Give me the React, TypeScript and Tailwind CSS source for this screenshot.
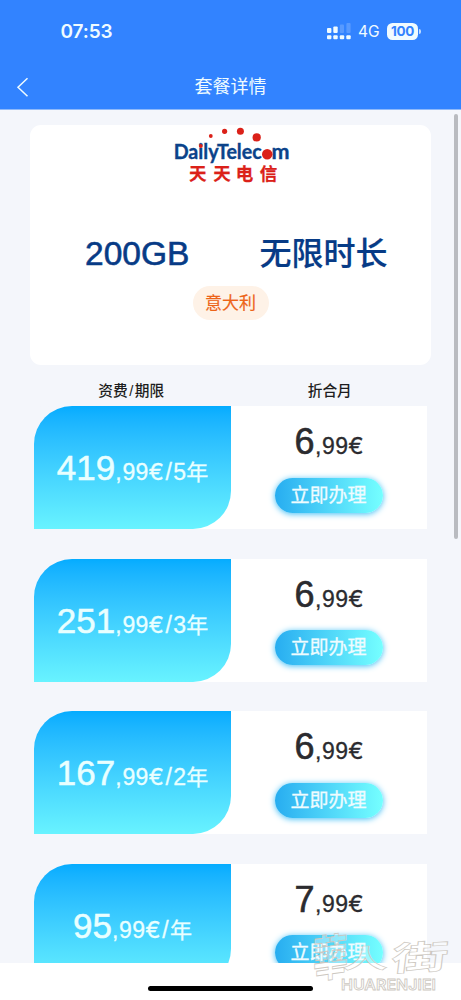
type Plan = { whole: string; years: string; monthly: string };

const plans: Plan[] = [
  { whole: '419', years: '5', monthly: '6' },
  { whole: '251', years: '3', monthly: '6' },
  { whole: '167', years: '2', monthly: '6' },
  { whole: '95', years: '', monthly: '7' },
];

function StatusBar() {
  return (
    <div className="flex h-[63px] items-center pr-[40px] pl-[60.5px] font-['Inter','Noto_Sans_CJK_SC',sans-serif] text-[#f0fbff]">
      <span className="text-[19px] leading-none font-semibold tracking-[-0.1px]">07:53</span>
      <svg className="ml-auto" width="25" height="17" viewBox="0 0 25 17" fill="currentColor">
        <rect x="0" y="5" width="4.4" height="5" rx="1" />
        <rect x="6.3" y="3.6" width="4.4" height="6.4" rx="1" />
        <rect x="12.8" y="1.5" width="4.2" height="8.5" rx="1" opacity=".2" />
        <rect x="19.4" y="0" width="4.2" height="10" rx="1" opacity=".2" />
        <rect x="0" y="12.3" width="4.4" height="4" rx="1" />
        <rect x="6.3" y="12.3" width="4.4" height="4" rx="1" />
        <rect x="12.8" y="12.3" width="4.4" height="4" rx="1" />
        <rect x="19.3" y="12.3" width="4.4" height="4" rx="1" />
      </svg>
      <span className="mt-px ml-[6px] w-[22px] text-[15.5px] leading-none">4G</span>
      <span className="ml-[7px] flex h-[17px] w-[31px] items-center justify-center rounded-[5.5px] bg-[#f0fbff] text-[13.5px] leading-none font-bold tracking-[-0.3px] text-[#3283ff]">
        100
      </span>
      <span className="ml-px h-[5px] w-[2px] rounded-r-full bg-[#bfdcff]" />
    </div>
  );
}

function Logo() {
  return (
    <svg
      className="mx-auto block"
      width="120"
      height="62"
      viewBox="171 125 120 62"
      fontFamily="'Lato', 'Noto Sans CJK SC', sans-serif"
    >
      <g fill="#db2119">
        <circle cx="210.8" cy="136" r="1.9" />
        <circle cx="224.6" cy="131.3" r="2.6" />
        <circle cx="240.4" cy="131.3" r="3.5" />
        <circle cx="256.7" cy="137.4" r="4.1" />
      </g>
      <text x="173.7" y="159" fontSize="20" fontWeight="700" fill="#0b438a" stroke="#0b438a" strokeWidth=".35" textLength="88" lengthAdjust="spacingAndGlyphs">
        DailyTelec
      </text>
      <text x="271.6" y="159" fontSize="20" fontWeight="700" fill="#0b438a" stroke="#0b438a" strokeWidth=".35" textLength="18" lengthAdjust="spacingAndGlyphs">
        m
      </text>
      <circle cx="200.8" cy="146" r="2" fill="#db2119" />
      <circle cx="267.2" cy="154.3" r="5.2" fill="#db2119" />
      <g fontSize="17.5" fontWeight="700" fill="#db2119" stroke="#db2119" strokeWidth=".25" fontFamily="'Noto Sans CJK SC', sans-serif">
        <text x="189" y="179.5">天</text>
        <text x="213.3" y="179.5">天</text>
        <text x="235.7" y="179.5">电</text>
        <text x="259.8" y="179.5">信</text>
      </g>
    </svg>
  );
}

function SummaryCard() {
  return (
    <section className="mx-[30px] mt-4 h-[240px] rounded-[11px] bg-white">
      <Logo />
      <div className="mt-[42px] flex h-[50px] items-center text-[#073b86]">
        <span className="ml-[55px] w-[174.5px] text-[33.5px] leading-none [-webkit-text-stroke:0.6px_#073b86]">200GB</span>
        <span className="text-[32px] leading-none font-medium [-webkit-text-stroke:0.2px_#073b86]">无限时长</span>
      </div>
      <div className="mx-auto mt-[7px] flex h-[34px] w-[76px] items-center justify-center rounded-full bg-[#fef2e7] pt-px text-[17px] leading-none text-[#ed6418] [-webkit-text-stroke:0.2px_#ed6418]">
        意大利
      </div>
    </section>
  );
}

function Cents() {
  return (
    <>
      <span className="mr-[0.8px]">,</span>
      <span className="tracking-[0.3px]">99</span>
      <span className="font-['Inter',sans-serif] text-[23px]">€</span>
    </>
  );
}

function PlanRow({ plan }: { plan: Plan }) {
  return (
    <div className="flex h-[123px] shrink-0 bg-white">
      <div className="w-[197px] bg-linear-to-br from-[#f4f6fb] from-50% to-white to-50%">
        <div className="flex h-full items-center justify-center rounded-tl-[38px] rounded-br-[38px] bg-linear-to-b from-[#04acff] to-[#68f3ff] text-[#e9ffff]">
          <p className="flex items-baseline leading-none whitespace-nowrap">
            <span className="text-[35px] [-webkit-text-stroke:0.5px_#e9ffff]">{plan.whole}</span>
            <span className="flex items-baseline text-[23px] [-webkit-text-stroke:0.3px_#e9ffff]">
              <Cents />
              <span className="mx-[1.5px]">/</span>
              <span>{plan.years}</span>
              <span className="text-[22px]">年</span>
            </span>
          </p>
        </div>
      </div>
      <div className="flex flex-1 flex-col items-center pt-[18px]">
        <p className="flex h-[38px] items-baseline leading-[36px] text-[#2b2b2f]">
          <span className="mr-[0.5px] text-[36px] [-webkit-text-stroke:0.6px_#2b2b2f]">{plan.monthly}</span>
          <span className="flex items-baseline text-[23px] [-webkit-text-stroke:0.3px_#2b2b2f]">
            <Cents />
          </span>
        </p>
        <button className="mt-[15.5px] flex h-[35px] w-[108px] items-center justify-center rounded-full bg-linear-to-r from-[#27adf0] to-[#75ffff] pr-px text-[19px] leading-none text-[#effcff] shadow-[0_1px_6px_#3dbdf5] [-webkit-text-stroke:0.3px_#effcff]">
          立即办理
        </button>
      </div>
    </div>
  );
}

function Watermark() {
  return (
    <svg className="absolute top-[928px] left-[308px]" width="153" height="68" viewBox="308 928 153 68">
      <g fill="#ffffff" fillOpacity=".35" stroke="#cdc8c1" strokeWidth=".8" fontFamily="'Noto Sans CJK TC', sans-serif" fontWeight="700">
        <text transform="translate(313 978) rotate(-8) skewX(-8) scale(.82 1.12)" fontSize="43">華</text>
        <text transform="translate(342 968) skewX(-4) scale(1.2 .68)" fontSize="38">人</text>
        <text transform="translate(390 971) rotate(-3) skewX(-10) scale(1.3 .75)" fontSize="44">街</text>
        <text x="341" y="989.5" fontSize="15" fontFamily="'Inter', sans-serif" fontWeight="600" textLength="95" lengthAdjust="spacingAndGlyphs">
          HUARENJIEI
        </text>
      </g>
    </svg>
  );
}

export default function App() {
  return (
    <div className="relative flex h-[1000px] w-[461px] flex-col overflow-hidden bg-white font-['Liberation_Sans','Noto_Sans_CJK_SC',sans-serif]">
      <header className="h-[109px] shrink-0 border-b border-[#8fb9fa] bg-[#3283ff] box-content">
        <StatusBar />
        <div className="grid h-[48px] grid-cols-[60px_1fr_60px] items-center text-[#effbff]">
          <svg className="ml-[16px]" width="14" height="20" viewBox="0 0 14 20" fill="none" stroke="currentColor" strokeWidth="1.5">
            <path d="M11.5 1.3 2 10.3l9.5 9" />
          </svg>
          <h1 className="text-center text-[18px] leading-none font-normal">套餐详情</h1>
        </div>
      </header>
      <main className="flex h-[853px] shrink-0 flex-col overflow-hidden bg-[#f4f6fb]">
        <div className="-mt-px">
          <SummaryCard />
        </div>
        <div className="mx-[34px] mt-[13px] mb-px grid h-[27px] shrink-0 grid-cols-2 items-center text-center text-[14.7px] leading-none font-medium text-[#1d1d20]">
          <span className="-translate-x-px">
            资费<span className="mx-[1.5px]">/</span>期限
          </span>
          <span className="translate-x-px">折合月</span>
        </div>
        <div className="mx-[34px] flex shrink-0 flex-col gap-[29.5px]">
          {plans.map((plan) => (
            <PlanRow key={plan.whole} plan={plan} />
          ))}
        </div>
      </main>
      <footer className="flex flex-1 justify-center bg-white pt-[23px]">
        <div className="h-[5px] w-[165px] rounded-full bg-black" />
      </footer>
      <div className="absolute top-[114px] left-[454px] h-[425px] w-[4px] rounded-full bg-[#b9bbc0]" />
      <Watermark />
    </div>
  );
}
